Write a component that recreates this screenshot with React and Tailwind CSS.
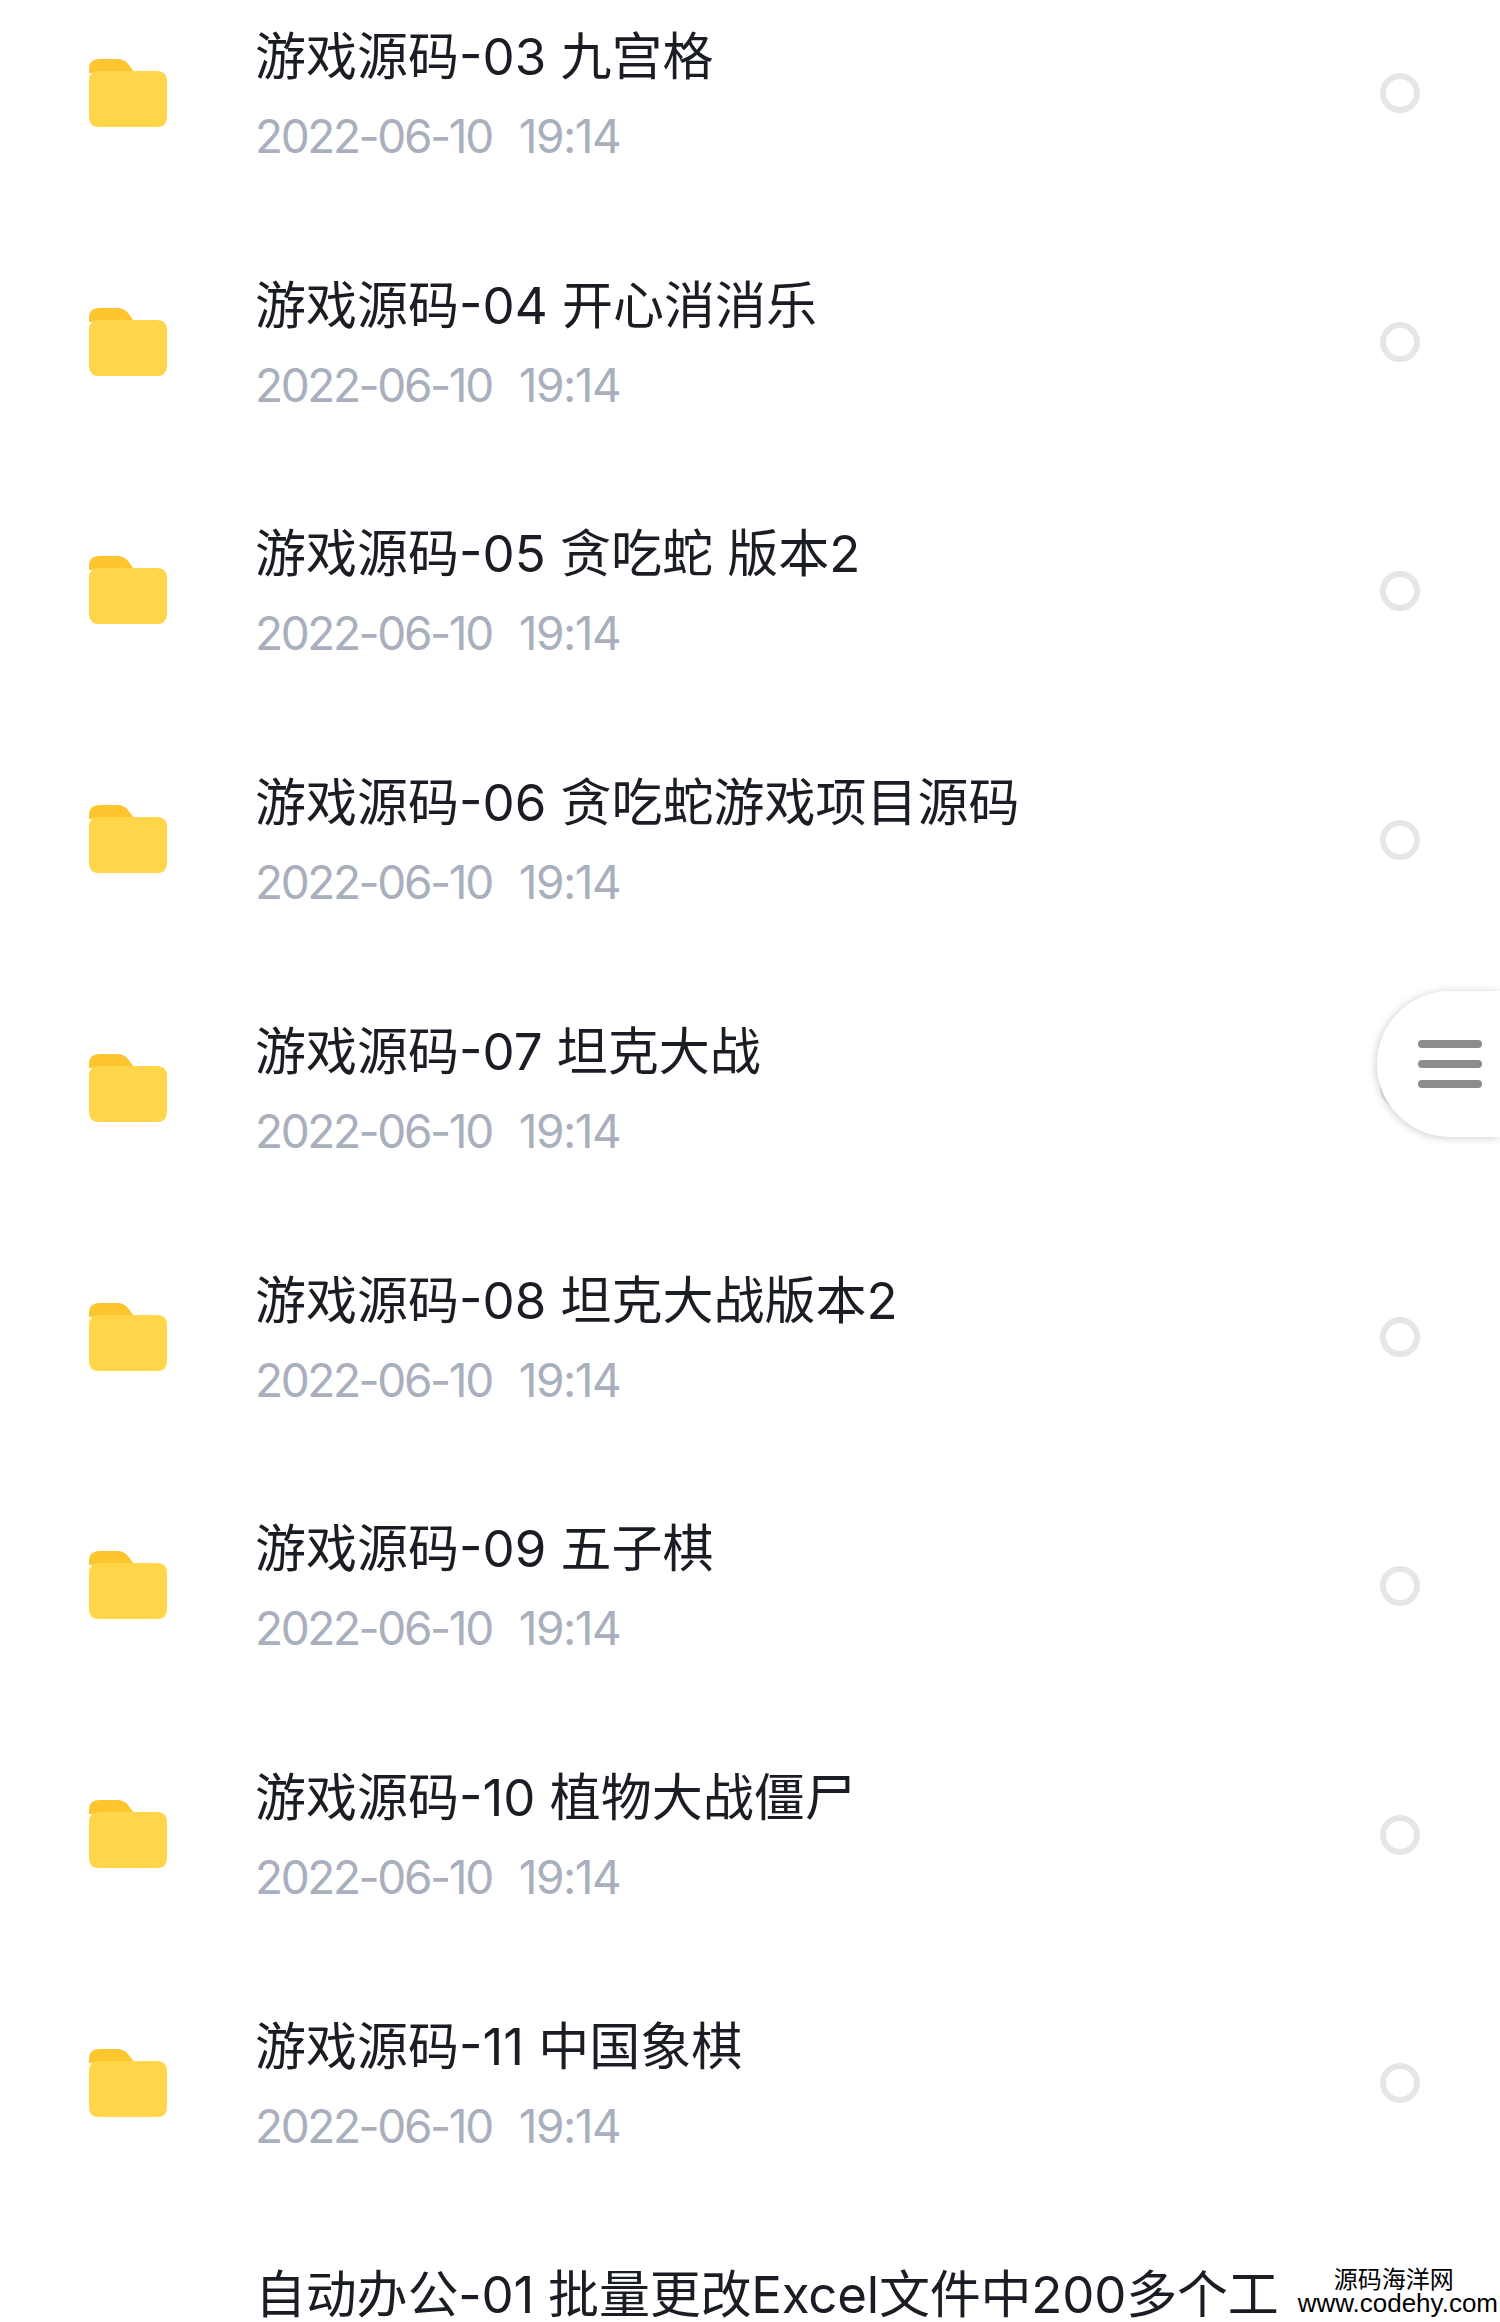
const rows = [
  "游戏源码-03 九宫格",
  "游戏源码-04 开心消消乐",
  "游戏源码-05 贪吃蛇 版本2",
  "游戏源码-06 贪吃蛇游戏项目源码",
  "游戏源码-07 坦克大战",
  "游戏源码-08 坦克大战版本2",
  "游戏源码-09 五子棋",
  "游戏源码-10 植物大战僵尸",
  "游戏源码-11 中国象棋",
];

function Folder() {
  return (
    <svg width="78" height="68" viewBox="0 0 78 68" className="-mt-[1px] shrink-0">
      <path d="M0 10 Q0 0 10 0 H28 Q35 0 39 5 L45 13 H30 L0 14 Z" fill="#fdc62f" />
      <path d="M0 22 Q0 12 10 12 H68 Q78 12 78 22 V58 Q78 68 68 68 H10 Q0 68 0 58 Z" fill="#ffd54a" />
    </svg>
  );
}

function Row({ title }) {
  return (
    <div className="flex h-[248.76px] items-center pl-[89px] pr-[80px]">
      <Folder />
      <div className="ml-[88px] flex min-w-0 flex-1 flex-col gap-[18px] self-center pt-[3px]">
        <div className="h-[64px] whitespace-nowrap text-[51px] leading-[64px] text-[#1a1d24]">{title}</div>
        <div className="flex h-[58px] gap-[27px] whitespace-nowrap text-[46px] leading-[58px] text-[#a9afbc]">
          <span className="tracking-[-2.4px]">2022-06-10</span>
          <span className="tracking-[-1.5px]">19:14</span>
        </div>
      </div>
      <div className="h-[40px] w-[40px] shrink-0 rounded-full border-[6px] border-[#e6e6e6]" />
    </div>
  );
}

export default function App() {
  return (
    <div className="relative h-[2322px] w-[1500px] overflow-hidden bg-white font-['Inter','Noto_Sans_CJK_SC',sans-serif]">
      <div className="-mt-[31px]">
        {rows.map((t) => (
          <Row key={t} title={t} />
        ))}
      </div>
      <div className="absolute left-[255px] top-[2268px] h-[54px] whitespace-nowrap text-[51px] leading-[54px] tracking-[-0.2px] text-[#1a1d24]">
        自动办公-01 批量更改Excel文件中200多个工
      </div>
      <div className="absolute left-[1377px] top-[991px] flex h-[146px] w-[123px] items-center rounded-l-[73px] bg-white pl-[41px] shadow-[-1px_1px_8px_rgba(0,0,0,0.2)]">
        <div className="flex flex-col gap-[12px]">
          <div className="h-[8px] w-[64px] rounded-full bg-[#8c8c8c]" />
          <div className="h-[8px] w-[64px] rounded-full bg-[#8c8c8c]" />
          <div className="h-[8px] w-[64px] rounded-full bg-[#8c8c8c]" />
        </div>
      </div>
      <div className="absolute right-[2px] top-[2268px] flex flex-col items-center text-black">
        <div className="-ml-[8px] h-[23px] text-[24px] leading-[23px]">源码海洋网</div>
        <div className="h-[24px] font-['Liberation_Sans',sans-serif] text-[26px] leading-[24px]">www.codehy.com</div>
      </div>
    </div>
  );
}
